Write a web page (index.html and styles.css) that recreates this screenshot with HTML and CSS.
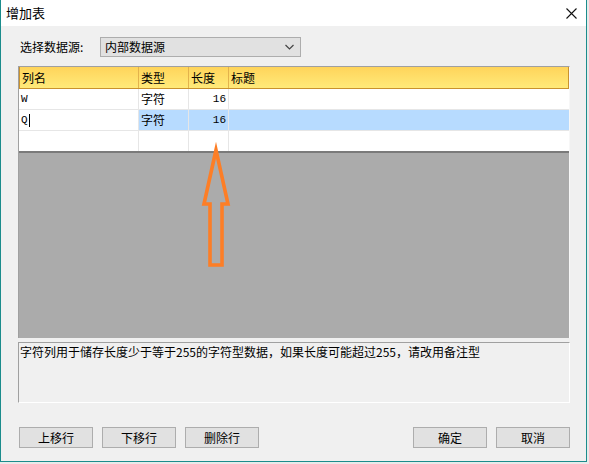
FILE: index.html
```html
<!DOCTYPE html>
<html>
<head>
<meta charset="utf-8">
<link rel="stylesheet" href="styles.css">
</head>
<body>
<div class="window">
  <div class="titlebar">
    <span class="title">增加表</span>
    <svg class="close" width="11" height="11" viewBox="0 0 11 11"><path d="M0.5 0.5 L10.5 10.5 M10.5 0.5 L0.5 10.5" stroke="#111" stroke-width="1.1" fill="none"/></svg>
  </div>
  <div class="content">
    <div class="source-row">
      <span class="label">选择数据源:</span>
      <div class="combo">
        <span>内部数据源</span>
        <svg width="9" height="6" viewBox="0 0 9 6"><path d="M0.5 1 L4.5 5 L8.5 1" stroke="#444" stroke-width="1.2" fill="none"/></svg>
      </div>
    </div>
    <div class="grid">
      <div class="row header">
        <div class="c c1">列名</div>
        <div class="c c2">类型</div>
        <div class="c c3">长度</div>
        <div class="c c4">标题</div>
      </div>
      <div class="row">
        <div class="c c1 mono">W</div>
        <div class="c c2">字符</div>
        <div class="c c3 mono num">16</div>
        <div class="c c4"></div>
      </div>
      <div class="row sel">
        <div class="c c1 mono edit">Q<span class="caret"></span></div>
        <div class="c c2">字符</div>
        <div class="c c3 mono num">16</div>
        <div class="c c4"></div>
      </div>
      <div class="row last">
        <div class="c c1"></div>
        <div class="c c2"></div>
        <div class="c c3"></div>
        <div class="c c4"></div>
      </div>
      <div class="empty"></div>
    </div>
    <div class="desc">字符列用于储存长度少于等于255的字符型数据，如果长度可能超过255，请改用备注型</div>
    <div class="buttons">
      <div class="group">
        <button class="btn">上移行</button>
        <button class="btn">下移行</button>
        <button class="btn">删除行</button>
      </div>
      <div class="group">
        <button class="btn">确定</button>
        <button class="btn">取消</button>
      </div>
    </div>
  </div>
  <svg class="arrow" width="589" height="464" viewBox="0 0 589 464">
    <polygon points="216,150 204,204 210,204 210,265 222,265 222,204 228,204" fill="none" stroke="#fd7e26" stroke-width="3.6" stroke-linejoin="miter" stroke-miterlimit="10"/>
  </svg>
</div>
</body>
</html>
```
FILE: styles.css
```css
* { box-sizing: border-box; }
html, body { margin: 0; padding: 0; }
body {
  width: 589px;
  height: 464px;
  background: #e9e9e9;
  font-family: "Noto Sans CJK SC", "Noto Sans", sans-serif;
  font-size: 12px;
  color: #000;
  overflow: hidden;
}
.window {
  position: relative;
  width: 587px;
  height: 462px;
  border: 1px solid #1b8c8c;
  border-top: none;
  background: #f0f0f0;
  display: flex;
  flex-direction: column;
}
.titlebar {
  height: 26px;
  background: #fff;
  display: flex;
  align-items: center;
  justify-content: space-between;
  padding: 0 9px 0 5px;
  flex: none;
}
.title { font-size: 13px; line-height: 16px; margin-top: -1px; }
.close { margin-top: 0px; }
.content {
  flex: 1;
  display: flex;
  flex-direction: column;
  padding: 0 16px 0 17px;
}
.source-row {
  display: flex;
  align-items: center;
  margin-top: 11px;
  height: 19px;
}
.label {
  width: 82px;
  padding-left: 2px;
  line-height: 14px;
}
.combo {
  width: 201px;
  height: 20px;
  background: #e1e1e1;
  border: 1px solid #adadad;
  display: flex;
  align-items: center;
  justify-content: space-between;
  padding: 0 6px 0 4px;
  line-height: 14px;
}
.grid {
  margin-top: 10px;
  height: 272px;
  border-top: 1px solid #a0a0a0;
  border-left: 1px solid #a0a0a0;
  border-right: 1px solid #f7f7f7;
  display: flex;
  flex-direction: column;
  background: #ababab;
}
.row {
  display: flex;
  height: 21px;
  flex: none;
  background: #fff;
}
.row .c {
  border-right: 1px solid #e6e6e6;
  border-bottom: 1px solid #e6e6e6;
  padding: 0 2px;
  display: flex;
  align-items: center;
  line-height: 14px;
  white-space: nowrap;
}
.row .c4 { border-right: none; }
.c1 { width: 120px; }
.c2 { width: 50px; }
.c3 { width: 40px; }
.c4 { flex: 1; }
.row.header {
  height: 22px;
  background: linear-gradient(#ffd45a, #ffea7a);
  border-left: 1px solid #c9922e;
  border-right: 1px solid #c9922e;
  border-bottom: 1px solid #c9922e;
}
.row.header .c {
  border-right: 1px solid #e3b24c;
  border-bottom: none;
  padding-left: 2px;
}
.row.header .c1 { width: 119px; }
.row.header .c4 { border-right: none; }
.row.sel { background: #b7dbff; }
.row.sel .c { border-color: #e6e6e6; }
.row.sel .c1 { background: #fff; }
.row.sel .c4 { border-right: none; }
.row.last { height: 21px; border-bottom: 2px solid #7a7a7a; height: 22px; }
.row.last .c { border-bottom: none; }
.mono { font-family: "Liberation Mono", monospace; font-size: 11px; }
.num { justify-content: flex-end; padding-right: 3px; }
.edit .caret {
  display: inline-block;
  width: 1px;
  height: 13px;
  background: #000;
  margin-left: 1px;
}
.empty { flex: 1; background: #ababab; }
.desc {
  margin-top: 4px;
  height: 61px;
  border-top: 1px solid #a0a0a0;
  border-left: 1px solid #a0a0a0;
  border-right: 1px solid #fff;
  border-bottom: 1px solid #fff;
  padding: 2px 1px;
  line-height: 14px;
  white-space: nowrap;
}
.buttons {
  margin-top: 24px;
  display: flex;
  justify-content: space-between;
  padding-left: 1px;
}
.group { display: flex; gap: 9px; }
.btn {
  width: 74px;
  height: 21px;
  background: #e1e1e1;
  border: 1px solid #adadad;
  font-family: "Noto Sans CJK SC", "Noto Sans", sans-serif;
  font-size: 12px;
  line-height: 14px;
  padding: 0;
  color: #000;
}
.arrow {
  position: absolute;
  left: -1px;
  top: 0;
  pointer-events: none;
}
```
